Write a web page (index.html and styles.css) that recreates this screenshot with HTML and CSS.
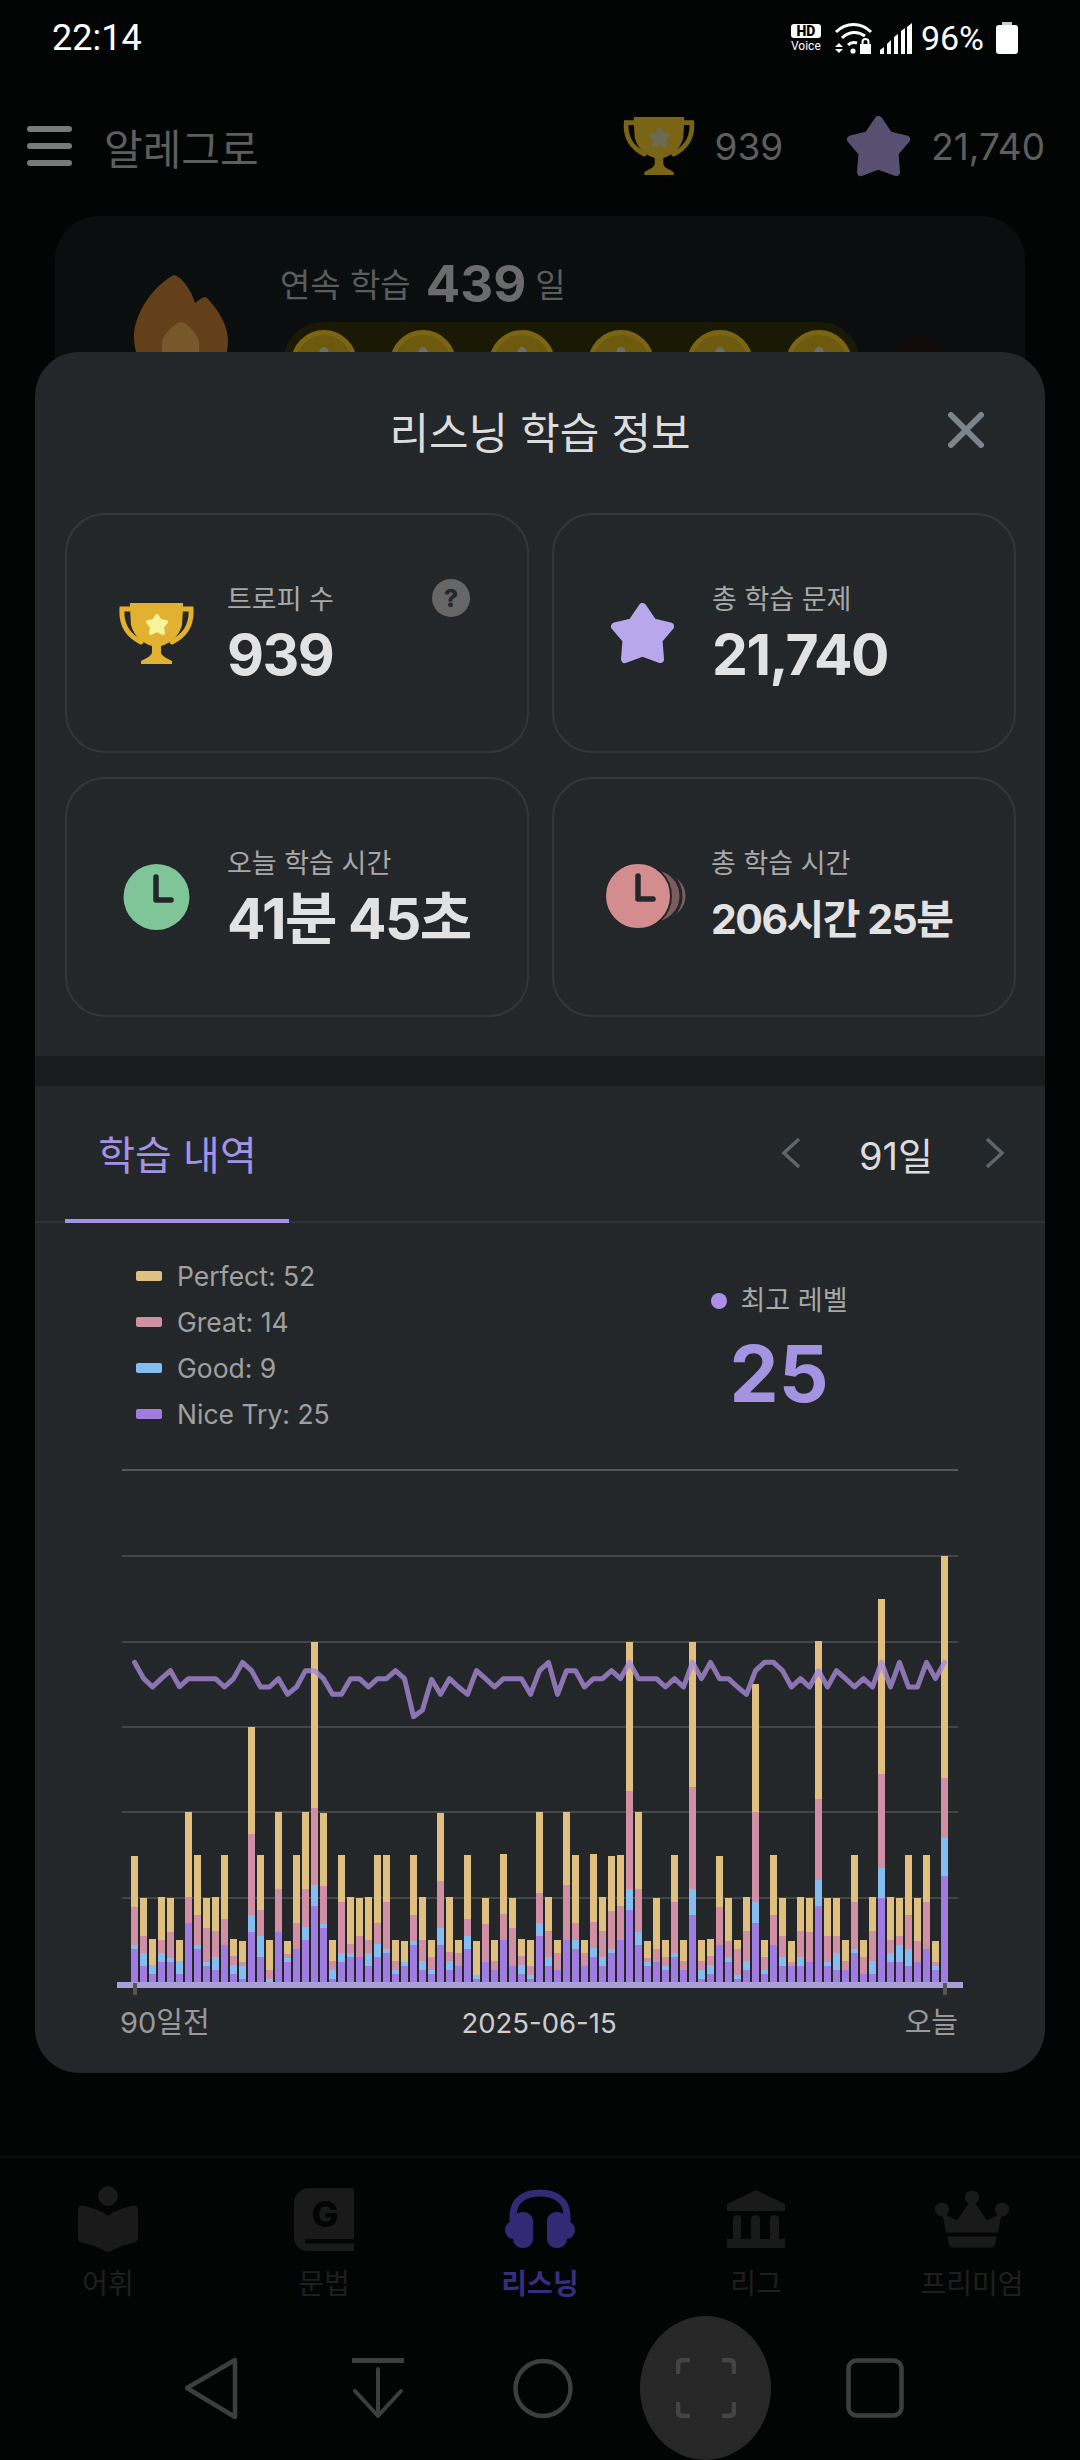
FILE: index.html
```html
<!DOCTYPE html>
<html lang="ko">
<head>
    <meta charset="UTF-8">
    <meta name="viewport" content="width=device-width, initial-scale=1.0">
    <title>리스닝 학습 정보</title>
    <link rel="stylesheet" href="styles.css">
</head>
<body>

<svg class="defs" aria-hidden="true">
    <symbol id="trophy" viewBox="0 0 75 61">
        <path d="M11 0H64V6L63 22C60 34 50 42 37.5 44C25 42 15 34 12 22L11 6Z" fill="currentColor"/>
        <path d="M12 6H3C2 20 8 32 22 39M63 6H72C73 20 67 32 53 39" fill="none" stroke="currentColor" stroke-width="5" stroke-linecap="round"/>
        <path d="M33 42H42V49C42 53 48 55 53 58V61H22V58C27 55 33 53 33 49Z" fill="currentColor"/>
        <polygon points="38,13 41,18 47,19 43,24 44,30 38,27 32,30 33,24 29,19 35,18" fill="var(--star)" stroke="var(--star)" stroke-width="4" stroke-linejoin="round"/>
    </symbol>
    <symbol id="star" viewBox="0 0 63 61">
        <polygon points="31.5,4 42,19.5 59,23.5 47.5,37 49,56 31.5,49.5 14,56 15.5,37 4,23.5 21,19.5" fill="currentColor" stroke="currentColor" stroke-width="8" stroke-linejoin="round"/>
    </symbol>
</svg>

<div class="status-bar">
    <span class="clock">22:14</span>
    <div class="status-icons">
        <div class="hd-voice"><b>HD</b><span>Voice</span></div>
        <svg class="wifi" width="39" height="31" viewBox="0 0 39 31">
            <path d="M2 9C12 -1 27 -1 37 9" fill="none" stroke="#fff" stroke-width="3"/>
            <path d="M8 15C15 8 24 8 31 13" fill="none" stroke="#fff" stroke-width="3"/>
            <path d="M14 22C17 19 20 19 23 20" fill="none" stroke="#fff" stroke-width="3"/>
            <circle cx="19" cy="28" r="2.6" fill="#fff"/>
            <path d="M5 20L9 24H1ZM1 26H9L5 30Z" fill="#fff"/>
            <path d="M26 21H37V31H26Z" fill="#fff"/>
            <path d="M28.5 21V19C28.5 15 34.5 15 34.5 19V21" fill="none" stroke="#fff" stroke-width="2"/>
        </svg>
        <svg class="signal" width="32" height="31" viewBox="0 0 32 31">
            <path d="M0 31V27L4 24V31ZM7 31V21L11 17V31ZM14 31V14L18 11V31ZM21 31V8L25 5V31ZM27 31V4L32 0V31Z" fill="#fff"/>
        </svg>
        <span class="battery-text">96%</span>
        <div class="battery"></div>
    </div>
</div>

<div class="top-bar">
    <div class="menu-btn"><i></i><i></i><i></i></div>
    <span class="app-name">알레그로</span>
    <div class="top-stat trophy-dim">
        <svg width="72" height="58"><use href="#trophy"/></svg>
        <span>939</span>
    </div>
    <div class="top-stat star-dim">
        <svg width="63" height="61"><use href="#star"/></svg>
        <span>21,740</span>
    </div>
</div>

<div class="streak-card">
    <svg class="flame" width="94" height="110" viewBox="0 0 94 110">
        <path d="M40 0C48 2 58 16 61 28C64 26 68 22 72 22C84 34 94 50 94 66C94 95 70 110 47 110C20 110 0 90 0 62C0 38 20 10 40 0Z" fill="#63401a"/>
        <path d="M47 47C52 47 65 60 65 68V110H28V68C28 60 42 47 47 47Z" fill="#77582b"/>
    </svg>
    <div class="streak-body">
        <p class="streak-text"><span>연속 학습</span><b>439</b><span class="streak-unit">일</span></p>
        <div class="coin-row">
            <div class="coin-pill">
                <div class="coin"></div>
                <div class="coin"></div>
                <div class="coin"></div>
                <div class="coin"></div>
                <div class="coin"></div>
                <div class="coin"></div>
            </div>
            <div class="coin-next"></div>
        </div>
    </div>
</div>

<div class="spacer"></div>

<div class="bottom-nav">
    <div class="nav-item">
        <svg width="60" height="66" viewBox="0 0 60 66">
            <circle cx="30" cy="10" r="10" fill="currentColor"/>
            <path d="M0 24Q0 19 6 20C16 22 24 25 30 30C36 25 44 22 54 20Q60 19 60 24V52Q60 56 55 57C45 59 38 62 33 65Q30 67 27 65C22 62 15 59 5 57Q0 56 0 52Z" fill="currentColor"/>
        </svg>
        <span>어휘</span>
    </div>
    <div class="nav-item">
        <svg width="60" height="64" viewBox="0 0 60 64">
            <path d="M16 1H56Q60 0 60 5V64H14C5 64 0 58 0 50V16C0 7 7 1 16 1Z" fill="currentColor"/>
            <rect x="11" y="52" width="49" height="4.5" rx="2" fill="#030505"/>
            <text x="31" y="40" text-anchor="middle" class="book-letter">G</text>
        </svg>
        <span>문법</span>
    </div>
    <div class="nav-item active">
        <svg width="70" height="58" viewBox="0 0 70 58">
            <path d="M8 32V26C8 10 20 3 35 3C50 3 62 10 62 26V32" fill="none" stroke="currentColor" stroke-width="7"/>
            <rect x="8" y="22" width="20" height="36" rx="9" fill="currentColor"/>
            <rect x="42" y="22" width="20" height="36" rx="9" fill="currentColor"/>
            <ellipse cx="8" cy="40" rx="8" ry="9" fill="currentColor"/>
            <ellipse cx="62" cy="40" rx="8" ry="9" fill="currentColor"/>
        </svg>
        <span>리스닝</span>
    </div>
    <div class="nav-item">
        <svg width="58" height="58" viewBox="0 0 58 58">
            <path d="M29 0L58 14V21H0V14Z" fill="currentColor"/>
            <path d="M6 49V29Q6 25 10 25Q14 25 14 29V49ZM24 49V29Q24 25 28.5 25Q33 25 33 29V49ZM43 49V29Q43 25 47.5 25Q52 25 52 29V49Z" fill="currentColor"/>
            <rect y="49" width="58" height="9" fill="currentColor"/>
        </svg>
        <span>리그</span>
    </div>
    <div class="nav-item">
        <svg width="74" height="57" viewBox="0 0 74 57">
            <circle cx="37" cy="7" r="7" fill="currentColor"/>
            <circle cx="7" cy="19" r="7" fill="currentColor"/>
            <circle cx="67" cy="19" r="7" fill="currentColor"/>
            <path d="M7 22L22 30L37 8L52 30L67 22L63 42H11Z" fill="currentColor"/>
            <path d="M12 46H62L60 54Q59 57 56 57H18Q15 57 14 54Z" fill="currentColor"/>
        </svg>
        <span>프리미엄</span>
    </div>
</div>

<div class="system-nav">
    <svg class="sys-back" width="54" height="61" viewBox="0 0 54 61">
        <path d="M2 30L50 2V59Z" fill="none" stroke="#3e3e3e" stroke-width="4.5" stroke-linejoin="round"/>
    </svg>
    <svg class="sys-down" width="52" height="61" viewBox="0 0 52 61">
        <rect y="0" width="52" height="5" fill="#3e3e3e"/>
        <path d="M26 11V58M3 33L26 58L49 33" fill="none" stroke="#3e3e3e" stroke-width="4" stroke-linecap="round" stroke-linejoin="round"/>
    </svg>
    <svg class="sys-home" width="60" height="61" viewBox="0 0 60 61">
        <circle cx="30" cy="30.5" r="27.5" fill="none" stroke="#3e3e3e" stroke-width="4.5"/>
    </svg>
    <div class="sys-capture">
        <svg width="60" height="60" viewBox="0 0 60 60">
            <path d="M14 2H7Q2 2 2 7V16M46 2H53Q58 2 58 7V16M14 58H7Q2 58 2 53V44M46 58H53Q58 58 58 53V44" fill="none" stroke="#444" stroke-width="4.5"/>
        </svg>
    </div>
    <svg class="sys-recent" width="58" height="60" viewBox="0 0 58 60">
        <rect x="2.5" y="2.5" width="53" height="55" rx="8" fill="none" stroke="#3e3e3e" stroke-width="4.5"/>
    </svg>
</div>

<div class="modal">
    <div class="modal-head">
        <span></span>
        <h2>리스닝 학습 정보</h2>
        <svg class="close" width="36" height="36" viewBox="0 0 36 36">
            <path d="M3 3L33 33M33 3L3 33" stroke="#7d858c" stroke-width="6" stroke-linecap="round"/>
        </svg>
    </div>

    <div class="info-grid">
        <div class="info-card">
            <svg class="trophy-icon" width="75" height="61"><use href="#trophy"/></svg>
            <div class="info-text">
                <p class="info-label">트로피 수</p>
                <p class="info-value">939</p>
            </div>
            <span class="help">?</span>
        </div>
        <div class="info-card">
            <svg class="star-icon" width="63" height="61"><use href="#star"/></svg>
            <div class="info-text">
                <p class="info-label">총 학습 문제</p>
                <p class="info-value">21,740</p>
            </div>
        </div>
        <div class="info-card">
            <svg class="clock-green" width="75" height="66" viewBox="0 0 75 66">
                <circle cx="37.5" cy="33" r="33" fill="#7fc597"/>
                <path d="M37 13V36H52" fill="none" stroke="#24272a" stroke-width="5.5" stroke-linecap="round" stroke-linejoin="round"/>
            </svg>
            <div class="info-text">
                <p class="info-label">오늘 학습 시간</p>
                <p class="info-value">41분 45초</p>
            </div>
        </div>
        <div class="info-card">
            <svg class="clock-pink" width="82" height="66" viewBox="0 0 82 66">
                <circle cx="58" cy="32" r="23" fill="#7d5c60" stroke="#24272a" stroke-width="3"/>
                <circle cx="48" cy="32" r="27" fill="#7d5c60" stroke="#24272a" stroke-width="3"/>
                <circle cx="32" cy="32" r="33" fill="#d38d8f" stroke="#24272a" stroke-width="2"/>
                <path d="M32 12V35H47" fill="none" stroke="#24272a" stroke-width="5.5" stroke-linecap="round" stroke-linejoin="round"/>
            </svg>
            <div class="info-text">
                <p class="info-label">총 학습 시간</p>
                <p class="info-value small">206시간 25분</p>
            </div>
        </div>
    </div>

    <div class="band"></div>

    <div class="tabs">
        <div class="tab active">학습 내역</div>
        <div class="range">
            <svg width="20" height="32" viewBox="0 0 20 32"><path d="M18 2L3 16L18 30" fill="none" stroke="#5d666d" stroke-width="3.5"/></svg>
            <span>91일</span>
            <svg width="20" height="32" viewBox="0 0 20 32"><path d="M2 2L17 16L2 30" fill="none" stroke="#5d666d" stroke-width="3.5"/></svg>
        </div>
    </div>

    <div class="stats">
        <ul class="legend">
            <li><i class="perfect"></i>Perfect: 52</li>
            <li><i class="great"></i>Great: 14</li>
            <li><i class="good"></i>Good: 9</li>
            <li><i class="nice"></i>Nice Try: 25</li>
        </ul>
        <div class="top-level">
            <p class="level-label"><i></i>최고 레벨</p>
            <p class="level-value">25</p>
        </div>
    </div>

    <svg class="chart" id="chart" width="880" height="545" viewBox="100 1460 880 545"></svg>

    <div class="chart-labels">
        <span>90일전</span>
        <span class="date">2025-06-15</span>
        <span class="today">오늘</span>
    </div>
</div>

<script src="chart.js"></script>
</body>
</html>
```

FILE: styles.css
```css
* {
    box-sizing: border-box;
}
body {
    margin: 0;
    width: 1080px;
    height: 2460px;
    position: relative;
    overflow: hidden;
    display: flex;
    flex-direction: column;
    background: #030505;
    font-family: Inter, "Noto Sans CJK KR", sans-serif;
}
p, h2, ul {
    margin: 0;
    padding: 0;
}
.defs {
    position: absolute;
    width: 0;
    height: 0;
}

/* status bar */
.status-bar {
    height: 76px;
    flex: none;
    display: flex;
    align-items: center;
    justify-content: space-between;
    padding: 0 62px 0 52px;
    color: #fff;
    font-family: Roboto, sans-serif;
}
.clock {
    font-size: 36px;
}
.status-icons {
    display: flex;
    align-items: center;
}
.hd-voice {
    width: 30px;
    display: flex;
    flex-direction: column;
    align-items: center;
    font-size: 12px;
    line-height: 13px;
}
.hd-voice b {
    width: 30px;
    height: 14px;
    background: #fff;
    color: #000;
    border-radius: 3px;
    text-align: center;
    font-size: 14px;
    font-weight: 900;
    line-height: 14px;
    margin-bottom: 2px;
}
.wifi {
    margin-left: 13px;
}
.signal {
    margin-left: 7px;
}
.battery-text {
    margin-left: 9px;
    font-size: 34px;
}
.battery {
    width: 22px;
    height: 29px;
    margin: 3px 0 0 12px;
    background: #fff;
    border-radius: 3px;
    position: relative;
}
.battery::before {
    content: "";
    position: absolute;
    top: -3px;
    left: 6px;
    width: 10px;
    height: 3px;
    background: #ccc;
}

/* top bar, dimmed behind the sheet */
.top-bar {
    height: 140px;
    flex: none;
    display: flex;
    align-items: center;
    padding: 0 35px 0 27px;
}
.menu-btn {
    width: 45px;
    display: flex;
    flex-direction: column;
    gap: 11px;
}
.menu-btn i {
    height: 6px;
    background: #7a7a7a;
    border-radius: 3px;
}
.app-name {
    margin-left: 32px;
    font-size: 42px;
    color: #5e5e5e;
}
.top-stat {
    display: flex;
    align-items: center;
    gap: 19px;
    font-size: 37px;
    color: #5e5e5e;
}
.trophy-dim {
    margin-left: auto;
    --star: #6b6b50;
}
.trophy-dim svg {
    color: #7a6415;
}
.star-dim {
    margin-left: 64px;
    gap: 21px;
}
.star-dim svg {
    color: #575071;
}

.streak-card {
    height: 300px;
    flex: none;
    margin: 0 55px;
    padding: 40px 0 0 79px;
    display: flex;
    gap: 52px;
    background: #0b0e0f;
    border-radius: 44px;
}
.flame {
    margin-top: 19px;
}
.streak-text {
    height: 54px;
    display: flex;
    align-items: center;
    font-size: 33px;
    color: #5c5c5c;
    white-space: nowrap;
}
.streak-text b {
    margin-left: 15px;
    font-size: 51px;
    color: #6b6b6b;
}
.streak-unit {
    margin-left: 9px;
}
.coin-row {
    display: flex;
    align-items: flex-start;
    margin: 12px 0 0 3px;
}
.coin-pill {
    width: 577px;
    padding: 8px;
    display: flex;
    gap: 33px;
    background: #1a1904;
    border-radius: 40px;
}
.coin {
    width: 66px;
    height: 66px;
    position: relative;
    border-radius: 50%;
    background: #6d5a0e;
    border: 5px solid #7b6413;
}
.coin::after {
    content: "";
    position: absolute;
    top: 12px;
    left: 23px;
    width: 10px;
    height: 14px;
    border-radius: 50%;
    background: #6f6f6a;
}
.coin-next {
    width: 60px;
    height: 60px;
    margin: 13px 0 0 30px;
    border-radius: 50%;
    background: #100a0b;
}

.spacer {
    flex: 1;
}

/* bottom nav */
.bottom-nav {
    height: 160px;
    flex: none;
    display: grid;
    grid-template-columns: repeat(5, 216px);
    border-top: 2px solid #0d0f0f;
}
.nav-item {
    display: flex;
    flex-direction: column;
    align-items: center;
    color: #1a1a1a;
}
.nav-item svg {
    margin-top: 28px;
    height: 66px;
}
.nav-item span {
    margin-top: 14px;
    font-size: 28px;
    line-height: 36px;
    color: #1f1f1f;
}
.nav-item.active {
    color: #332a75;
}
.nav-item.active span {
    color: #382e80;
    font-weight: 700;
}
.book-letter {
    font-size: 36px;
    font-weight: 800;
    fill: #030505;
}

.system-nav {
    height: 144px;
    flex: none;
    display: flex;
    align-items: center;
    padding-left: 185px;
}
.sys-down {
    margin-left: 113px;
}
.sys-home {
    margin-left: 109px;
}
.sys-capture {
    width: 131px;
    height: 144px;
    margin-left: 67px;
    display: flex;
    align-items: center;
    justify-content: center;
    border-radius: 50%;
    background: #272727;
}
.sys-recent {
    margin-left: 75px;
}

/* the sheet lies over the page */
.modal {
    position: absolute;
    left: 35px;
    top: 352px;
    width: 1010px;
    height: 1721px;
    background: #24272a;
    border-radius: 44px;
}
.modal-head {
    height: 161px;
    padding: 0 61px 6px;
    display: grid;
    grid-template-columns: 1fr auto 1fr;
    align-items: center;
}
.modal-head h2 {
    font-size: 43px;
    font-weight: 400;
    color: #dcdcdc;
}
.close {
    justify-self: end;
}
.info-grid {
    display: grid;
    grid-template-columns: 464px 464px;
    grid-auto-rows: 240px;
    gap: 24px 23px;
    padding: 0 30px;
}
.info-card {
    position: relative;
    display: flex;
    align-items: center;
    border: 2px solid #34373a;
    border-radius: 40px;
    padding-left: 52px;
}
.info-card:nth-child(even) {
    padding-left: 57px;
}
.info-text {
    margin-left: 33px;
    margin-top: 4px;
}
.info-card:nth-child(even) .info-text {
    margin-left: 38px;
}
.info-card:nth-child(4) .info-text {
    margin-left: 23px;
}
.info-card:nth-child(4) {
    padding-left: 52px;
}
.info-label {
    font-size: 27px;
    line-height: 40px;
    color: #a8a8a8;
}
.info-value {
    font-size: 57px;
    font-weight: 700;
    line-height: 70px;
    letter-spacing: -1.5px;
    color: #e2e2e2;
    white-space: nowrap;
}
.info-value.small {
    font-size: 41px;
}
.trophy-icon {
    color: #e2b12f;
    --star: #f5f39c;
}
.star-icon {
    color: #b9a7ec;
}
.help {
    position: absolute;
    top: 64px;
    right: 57px;
    width: 38px;
    height: 38px;
    border-radius: 50%;
    background: #666;
    color: #24272a;
    font-size: 25px;
    font-weight: 800;
    line-height: 38px;
    text-align: center;
}

.band {
    height: 30px;
    margin-top: 39px;
    background: #191b1d;
}

.tabs {
    height: 137px;
    display: flex;
    justify-content: space-between;
    border-bottom: 2px solid #303337;
}
.tab {
    width: 224px;
    height: 137px;
    margin-left: 30px;
    padding-left: 1px;
    text-align: center;
    font-size: 40px;
    line-height: 139px;
    color: #a393e6;
    border-bottom: 4px solid #a393e6;
}
.range {
    display: flex;
    align-items: center;
    gap: 58px;
    height: 134px;
    padding-right: 40px;
    font-size: 38px;
    color: #dcdcdc;
}
.range span {
    margin-right: -6px;
}

.stats {
    height: 237px;
    padding-top: 30px;
    display: grid;
    grid-template-columns: 675px auto;
    align-items: start;
}
.legend {
    list-style: none;
    padding-left: 101px;
}
.legend li {
    display: flex;
    align-items: center;
    gap: 15px;
    font-size: 26.5px;
    line-height: 46px;
    color: #a0a0a0;
}
.legend i {
    width: 26px;
    height: 10px;
    border-radius: 2px;
}
.legend .perfect {
    background: #e0c080;
}
.legend .great {
    background: #d08fa3;
}
.legend .good {
    background: #85bdf0;
}
.legend .nice {
    background: #a07be0;
}
.top-level {
    margin-top: 28px;
    width: 138px;
    display: flex;
    flex-direction: column;
    align-items: center;
}
.level-label {
    display: flex;
    align-items: center;
    gap: 14px;
    font-size: 27px;
    line-height: 40px;
    color: #a8a8a8;
    white-space: nowrap;
}
.level-label i {
    width: 16px;
    height: 16px;
    border-radius: 50%;
    background: #ab8fe8;
}
.level-value {
    margin-top: 13px;
    font-size: 78px;
    font-weight: 700;
    line-height: 80px;
    color: #a393e0;
}

.chart {
    display: block;
    margin-left: 65px;
}
.chart-labels {
    display: grid;
    grid-template-columns: 1fr auto 1fr;
    padding: 0 87px 0 85px;
    font-size: 29px;
    line-height: 36px;
    color: #999;
}
.chart-labels .date {
    font-size: 27.5px;
    color: #ccc;
}
.chart-labels .today {
    justify-self: end;
}
```

FILE: chart.js
```js
const chart = document.getElementById('chart');

// tops of each stacked bar, measured at 3x from y=1540: perfect, great, good, nice try
const bars = [
    [948,1101,1215,1227],[1074,1188,1239,1278],[1197,1275,1275,1302],[1071,1200,1239,1266],
    [1074,1176,1254,1266],[1200,1263,1263,1302],[816,1071,1149,1149],[945,1125,1215,1227],
    [1074,1164,1266,1278],[1071,1173,1251,1290],[945,1137,1215,1215],[1197,1248,1275,1302],
    [1203,1266,1278,1317],[561,882,1125,1176],[945,1110,1188,1251],[1200,1290,1317,1327],
    [816,1047,1176,1176],[1203,1242,1254,1266],[945,1149,1227,1227],[816,1047,1161,1200],
    [306,804,1035,1098],[819,1038,1152,1164],[1200,1263,1290,1317],[945,1086,1239,1266],
    [1071,1212,1239,1251],[1074,1188,1251,1251],[1071,1200,1239,1278],[945,1149,1212,1251],
    [945,1086,1227,1239],[1200,1263,1290,1302],[1203,1266,1266,1278],[945,1125,1203,1215],
    [1071,1200,1263,1290],[1200,1251,1290,1302],[819,1023,1164,1215],[1071,1236,1263,1290],
    [1200,1239,1278,1278],[945,1137,1188,1227],[1203,1305,1305,1317],[1074,1152,1266,1266],
    [1200,1263,1290,1290],[942,1122,1200,1200],[1074,1164,1278,1278],[1197,1248,1275,1302],
    [1200,1278,1305,1317],[816,1059,1149,1188],[1071,1173,1251,1278],[1200,1239,1290,1290],
    [816,1035,1200,1200],[945,1149,1200,1227],[1200,1239,1278,1278],[942,1146,1224,1251],
    [1071,1173,1251,1278],[948,1113,1227,1239],[945,1098,1200,1200],[306,753,1047,1110],
    [816,1047,1176,1215],[1203,1254,1266,1278],[1074,1227,1266,1266],[1200,1251,1278,1290],
    [945,1086,1239,1251],[1200,1263,1290,1290],[306,741,1047,1125],[1200,1263,1290,1317],
    [1197,1248,1275,1302],[948,1101,1215,1215],[1074,1203,1254,1266],[1200,1227,1305,1317],
    [1071,1173,1263,1290],[432,816,1086,1149],[1200,1251,1290,1302],[945,1125,1215,1215],
    [1074,1188,1251,1278],[1203,1266,1278,1278],[1071,1173,1251,1278],[1074,1176,1266,1266],
    [303,777,1020,1098],[1074,1188,1266,1278],[1074,1188,1239,1290],[1200,1263,1290,1290],
    [945,1086,1227,1239],[1200,1251,1302,1302],[1071,1173,1263,1302],[177,702,984,1074],
    [1071,1200,1239,1266],[1074,1188,1215,1266],[945,1125,1227,1278],[1074,1203,1266,1266],
    [945,1086,1227,1227],[1203,1266,1278,1290],[48,714,894,1008]
];

// max level line, same scale
const levels = [
    367,415,441,415,392,440,416,416,416,416,441,416,367,392,441,441,416,463,441,392,392,416,463,
    463,416,416,441,416,416,392,416,530,510,418,463,416,441,463,392,416,441,416,416,416,463,392,
    367,463,392,392,441,416,416,392,416,367,416,416,416,441,416,441,367,416,367,416,416,441,463,
    392,367,367,392,441,416,441,392,441,392,416,441,416,441,367,441,367,441,441,367,416,367
];

const colors = ['#e0c080', '#d08fa3', '#85bdf0', '#a07be0'];
const baseZ = 1327;
const toY = (z) => 1540 + z / 3;

let html = '<rect x="122" y="1469" width="836" height="2" fill="#55585a"/>';

[1556, 1642, 1727, 1812, 1898].forEach((y) => {
    html += `<rect x="122" y="${y - 1}" width="836" height="2" fill="#43474a"/>`;
});

bars.forEach((bar, i) => {
    const x = 131 + 9 * i;
    bar.forEach((top, s) => {
        const bottom = s < 3 ? bar[s + 1] : baseZ;
        if (bottom > top) {
            html += `<rect x="${x}" y="${toY(top)}" width="7" height="${(bottom - top) / 3}" fill="${colors[s]}"/>`;
        }
    });
});

const points = levels.map((z, i) => `${134.5 + 9 * i},${toY(z)}`).join(' ');
html += `<polyline points="${points}" fill="none" stroke="#a688d6" stroke-opacity="0.8" stroke-width="5" stroke-linejoin="round" stroke-linecap="round"/>`;

html += '<rect x="117" y="1982" width="846" height="6" fill="#a89fd6"/>';
html += '<rect x="133" y="1983" width="4" height="12" fill="#555"/>';
html += '<rect x="943" y="1983" width="4" height="12" fill="#555"/>';

chart.innerHTML = html;
```
